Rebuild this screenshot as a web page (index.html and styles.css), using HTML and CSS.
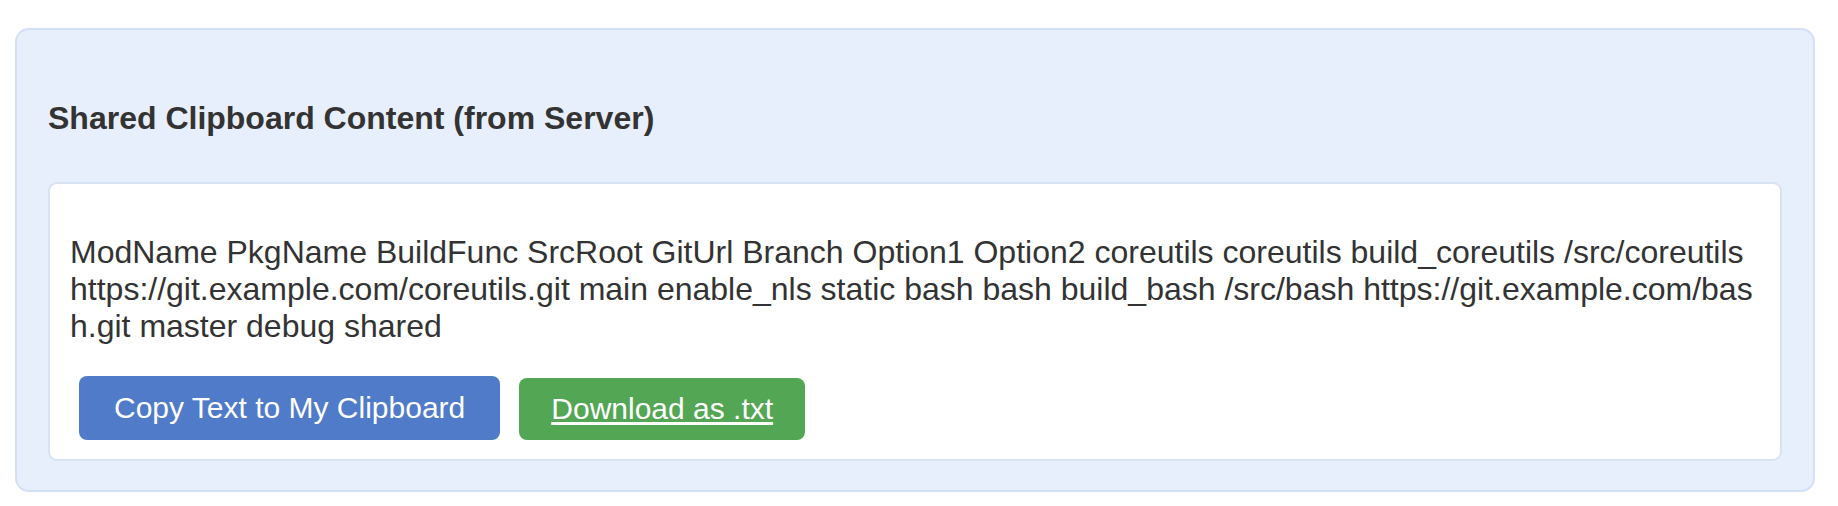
FILE: index.html
```html
<!DOCTYPE html>
<html lang="en">
<head>
<meta charset="utf-8">
<title>Shared Clipboard</title>
<link rel="stylesheet" href="styles.css">
</head>
<body>
  <section class="panel">
    <h3 class="panel-title">Shared Clipboard Content (from Server)</h3>
    <div class="card">
      <div class="clip-text">ModName PkgName BuildFunc SrcRoot GitUrl Branch Option1 Option2 coreutils coreutils build_coreutils /src/coreutils https://git.example.com/coreutils.git main enable_nls static bash bash build_bash /src/bash https://git.example.com/bash.git master debug shared</div>
      <div class="actions">
        <button class="btn btn-copy" type="button">Copy Text to My Clipboard</button>
        <a class="btn btn-download" href="#">Download as .txt</a>
      </div>
    </div>
  </section>
</body>
</html>
```

FILE: styles.css
```css
html, body {
  margin: 0;
  padding: 0;
  background: #ffffff;
}

body {
  font-family: "Liberation Sans", Arial, Helvetica, sans-serif;
  color: #333333;
  padding: 28px 23px 0 15px;
}

.panel {
  box-sizing: border-box;
  width: 1800px;
  background: #e8effc;
  border: 2px solid #d2dff6;
  border-radius: 14px;
  padding: 70px 31px 29px 31px;
}

.panel-title {
  margin: 0 0 45px 0;
  font-size: 32px;
  font-weight: bold;
  line-height: normal;
  color: #333333;
}

.card {
  background: #ffffff;
  border: 2px solid #d7e2f2;
  border-radius: 9px;
  padding: 20px 20px 19px 20px;
}

.clip-text {
  margin: 30px 0 31px 0;
  font-size: 32px;
  line-height: normal;
  color: #333333;
  word-break: break-all;
}

.actions {
  display: flex;
  align-items: flex-end;
  gap: 19px;
  padding-left: 9px;
}

.btn {
  font-family: "Liberation Sans", Arial, Helvetica, sans-serif;
  font-size: 30px;
  line-height: 36px;
  color: #ffffff;
  border: none;
  border-radius: 8px;
  display: inline-block;
}

.btn-copy {
  background: #4f7bc9;
  padding: 14px 35px;
  cursor: pointer;
}

.btn-download {
  background: #53a653;
  padding: 13px 32px;
  text-decoration: underline;
  text-underline-offset: 3px;
}
```
